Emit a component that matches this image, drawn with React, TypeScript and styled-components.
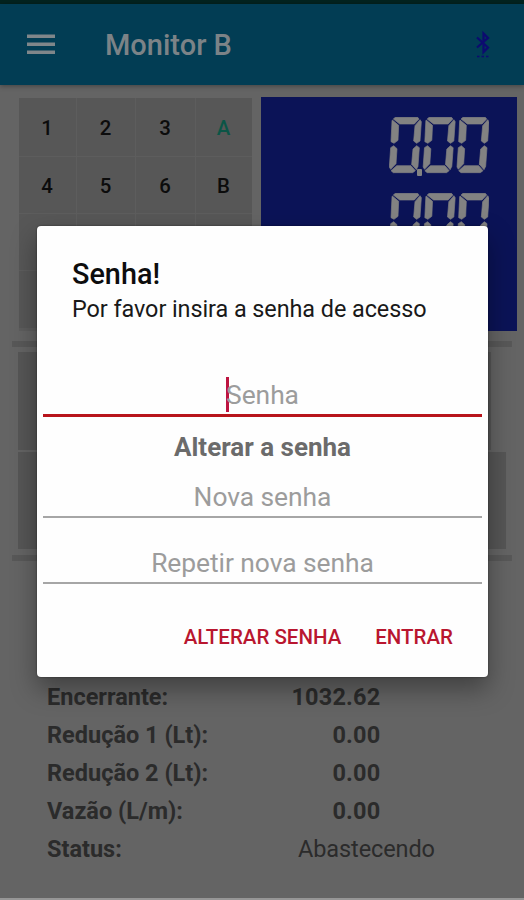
import React from "react";
import styled, { createGlobalStyle } from "styled-components";

const GlobalStyle = createGlobalStyle`
  *, *::before, *::after { box-sizing: border-box; }
  body { margin: 0; background: #646464; font-family: Roboto, "Liberation Sans", sans-serif; }
  button, input { font-family: inherit; }
`;

const Screen = styled.div`
  position: relative;
  display: flex;
  flex-direction: column;
  width: 524px;
  height: 900px;
  overflow: hidden;
  background: #646464;
`;

const StatusBar = styled.div`
  flex: none;
  height: 4px;
  background: #03231f;
`;

const AppBar = styled.header`
  flex: none;
  display: flex;
  align-items: center;
  height: 81px;
  padding: 0 32px 0 27px;
  background: #023d54;
  box-shadow: 0 1px 5px rgba(0, 0, 0, 0.35);
`;

const MenuIcon = styled.svg`
  display: block;
  width: 28px;
  height: 20px;
  margin: -2px 50px 0 0;
  fill: #7f868a;
`;

const AppTitle = styled.h1`
  flex: 1;
  margin: 0;
  font-size: 29px;
  line-height: 40px;
  font-weight: 500;
  color: #7c8387;
`;

const BluetoothIcon = styled.svg`
  display: block;
  width: 18px;
  height: 30px;
  fill: none;
  stroke: #0c0b70;
  stroke-width: 2.2;
`;

const Board = styled.section`
  flex: none;
  display: flex;
  gap: 9px;
  height: 234px;
  margin: 12px 7px 10px 19px;
`;

const Keypad = styled.div`
  display: grid;
  grid-template-columns: 57px 58px 59px 56px;
  grid-template-rows: 58px 56px 56px 57px;
  gap: 1px;
  width: 233px;
  margin-top: 1px;
  align-content: start;
  background: #5d5d5d;
`;

const Key = styled.button<{ $accent?: boolean }>`
  border: 0;
  padding: 2px 1px 0 0;
  background: #575757;
  font-size: 20.4px;
  line-height: 24px;
  font-weight: 500;
  color: ${(p) => (p.$accent ? "#0b5546" : "#0c0c0c")};
`;

const Display = styled.div`
  flex: 1;
  display: flex;
  flex-direction: column;
  align-items: flex-end;
  gap: 16.5px;
  padding: 19.5px 28px 0 0;
  background: #0b1357;
`;

const Readout = styled.svg`
  display: block;
  width: 100px;
  height: 60px;
  flex: none;
  fill: #828282;
`;

const Rule = styled.div`
  flex: none;
  height: 6px;
  margin: 0 12px;
  background: #585858;
`;

const Panels = styled.div`
  flex: none;
  display: flex;
  flex-direction: column;
  gap: 2px;
  margin: 5px 18px 6px;
`;

const Panel = styled.div<{ $inset?: number }>`
  height: ${(p) => (p.$inset ? 98 : 97)}px;
  margin-right: ${(p) => p.$inset ?? 0}px;
  background: #565656;
`;

const Readings = styled.dl`
  flex: 1;
  margin: 117px 0 0 47px;
`;

const Reading = styled.div`
  display: flex;
  height: 38px;
  font-size: 23.5px;
  line-height: 38px;
  color: #2b2b2b;
`;

const ReadingName = styled.dt`
  flex: none;
  width: 200px;
  font-weight: 700;
`;

const ReadingValue = styled.dd<{ $plain?: boolean }>`
  margin: 0 0 0 ${(p) => (p.$plain ? 51 : 0)}px;
  width: ${(p) => (p.$plain ? "auto" : "133.5px")};
  text-align: ${(p) => (p.$plain ? "left" : "right")};
  font-weight: ${(p) => (p.$plain ? 400 : 700)};
  letter-spacing: ${(p) => (p.$plain ? -0.1 : 0.2)}px;
`;

const BottomEdge = styled.div`
  flex: none;
  height: 2px;
  background: #969696;
`;

const Overlay = styled.div`
  position: absolute;
  inset: 0;
  display: flex;
  align-items: flex-start;
  padding: 226px 36px 0 37px;
`;

const Dialog = styled.form`
  flex: 1;
  display: flex;
  flex-direction: column;
  height: 451px;
  padding: 31px 6px 0;
  border-radius: 4px;
  background: #fefefe;
  box-shadow: 0 0 2px rgba(0, 0, 0, 0.5), 0 12px 26px rgba(0, 0, 0, 0.36);
`;

const DialogTitle = styled.h2`
  margin: 0 29px;
  font-size: 28.8px;
  line-height: 34px;
  font-weight: 500;
  color: #0d0d0d;
`;

const DialogText = styled.p`
  margin: 3px 29px 51px;
  font-size: 23.4px;
  line-height: 30px;
  letter-spacing: -0.06px;
  color: #191919;
`;

const Field = styled.div<{ $active?: boolean }>`
  display: flex;
  justify-content: center;
  align-items: center;
  height: ${(p) => (p.$active ? 42 : 40)}px;
  padding-top: ${(p) => (p.$active ? 1 : 0)}px;
  border-bottom: ${(p) => (p.$active ? "3px solid #b8141b" : "2px solid #a6a6a6")};
  font-size: 26.4px;
  line-height: 38px;
  letter-spacing: -0.05px;
  color: #9c9c9c;
  & + & { margin-top: 26px; }
`;

const Caret = styled.span`
  width: 3px;
  height: 35px;
  margin: -2px -3px 0 0;
  background: #bd1440;
`;

const SectionLabel = styled.h3`
  margin: 15px 0 16px;
  text-align: center;
  font-size: 26px;
  line-height: 30px;
  font-weight: 700;
  color: #6b6b6b;
`;

const Actions = styled.div`
  display: flex;
  justify-content: flex-end;
  gap: 34px;
  margin: 38px 29px 0 0;
`;

const Action = styled.button`
  border: 0;
  padding: 0;
  background: none;
  font-size: 20.5px;
  line-height: 30px;
  font-weight: 500;
  color: #b9162f;
`;

const KEYS = ["1", "2", "3", "A", "4", "5", "6", "B", "", "", "", "", "", "", "", ""];

const SEGMENTS = [
  "18,1 85,1 89,6 75,21 31,21 12,6",
  "9,9 28,25 26,70 14,79 5,74 8,12",
  "92,8 96,14 92,72 82,79 73,72 77,26",
  "13,86 23,95 20,140 4,157 0,150 4,92",
  "82,86 90,92 86,148 81,158 67,142 71,96",
  "22,146 65,146 78,161 70,167 12,167 5,161",
];

function Indicator() {
  return (
    <Readout viewBox="0 0 300 180" role="img" aria-label="0.00">
      {[0, 101.5, 203].map((x) => (
        <g key={x} transform={`translate(${x + 1} 0)`}>
          {SEGMENTS.map((points) => (
            <polygon key={points} points={points} stroke="#828282" strokeWidth="2" strokeLinejoin="round" />
          ))}
        </g>
      ))}
      <rect x="84" y="156" width="15" height="21" rx="3" />
    </Readout>
  );
}

const READINGS = [
  { name: "Encerrante:", value: "1032.62" },
  { name: "Redução 1 (Lt):", value: "0.00" },
  { name: "Redução 2 (Lt):", value: "0.00" },
  { name: "Vazão (L/m):", value: "0.00" },
  { name: "Status:", value: "Abastecendo", plain: true },
];

export default function App() {
  return (
    <>
      <GlobalStyle />
      <Screen>
        <StatusBar />
        <AppBar>
          <MenuIcon viewBox="0 0 28 20">
            <rect y="0.5" width="28" height="3.5" />
            <rect y="8.5" width="28" height="3.5" />
            <rect y="16.5" width="28" height="3.5" />
          </MenuIcon>
          <AppTitle>Monitor B</AppTitle>
          <BluetoothIcon viewBox="0 0 18 30">
            <path d="M3 7.500 14 17.500 9.500 22V3.500L14 8 3 17.500" />
            <path d="M3 26.500H15" strokeDasharray="2.500 2" strokeWidth="1.600" />
          </BluetoothIcon>
        </AppBar>
        <Board>
          <Keypad>
            {KEYS.map((label, i) => (
              <Key key={i} $accent={label === "A"}>{label}</Key>
            ))}
          </Keypad>
          <Display>
            <Indicator />
            <Indicator />
          </Display>
        </Board>
        <Rule />
        <Panels>
          <Panel $inset={15} />
          <Panel />
        </Panels>
        <Rule />
        <Readings>
          {READINGS.map((r) => (
            <Reading key={r.name}>
              <ReadingName>{r.name}</ReadingName>
              <ReadingValue $plain={r.plain}>{r.value}</ReadingValue>
            </Reading>
          ))}
        </Readings>
        <BottomEdge />
        <Overlay>
          <Dialog>
            <DialogTitle>Senha!</DialogTitle>
            <DialogText>Por favor insira a senha de acesso</DialogText>
            <Field $active>
              <Caret />
              Senha
            </Field>
            <SectionLabel>Alterar a senha</SectionLabel>
            <Field>Nova senha</Field>
            <Field>Repetir nova senha</Field>
            <Actions>
              <Action type="button">ALTERAR SENHA</Action>
              <Action type="button">ENTRAR</Action>
            </Actions>
          </Dialog>
        </Overlay>
      </Screen>
    </>
  );
}
